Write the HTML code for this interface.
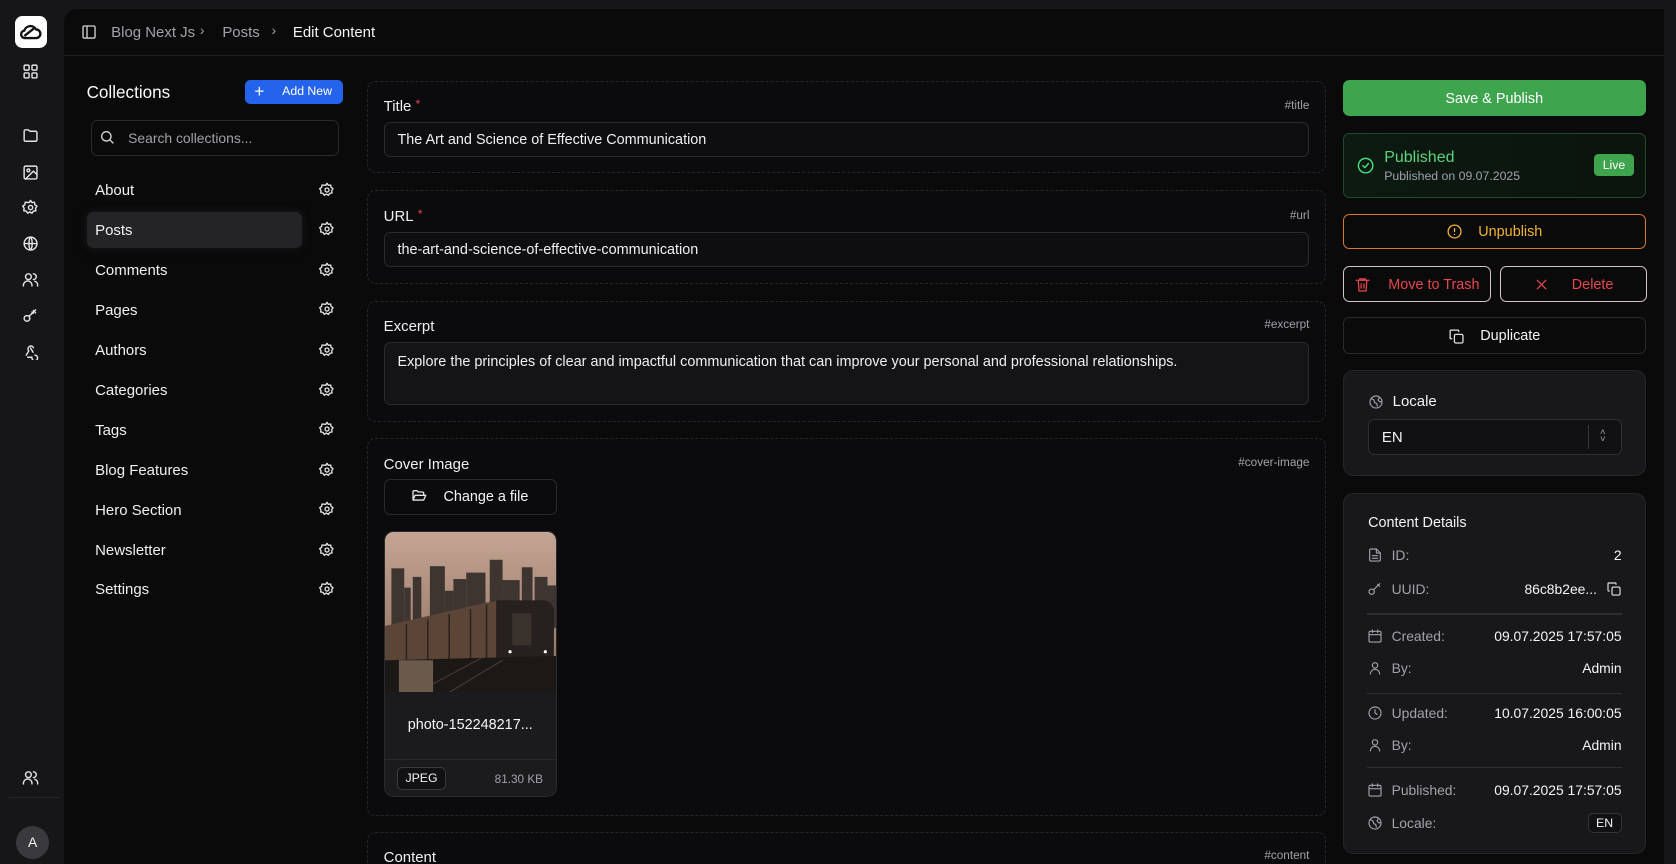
<!DOCTYPE html>
<html><head><meta charset="utf-8">
<style>
*{box-sizing:border-box;margin:0;padding:0}
html,body{width:1676px;height:864px;overflow:hidden;background:#161618}
#w{zoom:1.06888;width:1568px;height:808px;position:relative;font-family:"Liberation Sans",sans-serif;color:#ececee;background:#161618}
.a{position:absolute}
svg{display:block}
.ic{position:absolute;width:16px;height:16px;fill:none;stroke:#e4e4e7;stroke-width:2;stroke-linecap:round;stroke-linejoin:round}
#main{left:60px;top:8px;width:1497px;height:800px;background:#0a0a0b;border-radius:12px 0 0 0}
.card{position:absolute;left:343px;width:898px;border:1px dashed #26262a;border-radius:8px;background:#0b0b0d}
.lbl{position:absolute;left:15px;font-size:14px;color:#f0f0f2}
.lbl b{color:#e5484d;font-weight:normal;font-size:11px;vertical-align:top;margin-left:4px}
.tag{position:absolute;right:15px;font-size:11px;color:#a1a1aa}
.inp{position:absolute;left:15px;right:15px;border:1px solid #2a2a2e;border-radius:6px;background:#0e0e10;font-size:13.5px;color:#f0f0f2;padding-left:12px}
.li{position:absolute;left:89px;font-size:14px;color:#f0f0f2}
.gear{left:298px}
.btn{position:absolute;left:1256px;width:284px;border-radius:6px;font-size:13.5px;display:flex;align-items:center;justify-content:center;gap:14px}
.dt{position:absolute;left:22px;right:22px;font-size:13px;color:#a1a1aa;height:20px;display:flex;align-items:center}
.dt span.v{margin-left:auto;color:#f4f4f5}
.dt .ic{position:static;width:15px;height:15px;stroke:#a1a1aa;stroke-width:1.7;margin-right:8px}
.hr{position:absolute;left:22px;right:22px;height:1px;background:#2e2e33}
</style></head><body><div id="w">

<!-- left rail -->
<div class="a" style="left:14px;top:15px;width:30px;height:30px;background:#fff;border-radius:7px"></div>
<svg class="a" style="left:18px;top:21px" width="22" height="18" viewBox="0 0 22 18" fill="none" stroke="#111" stroke-width="2.2"><path d="M6 15h10a4 4 0 0 0 0-8 6 6 0 0 0-11 1 3.5 3.5 0 0 0 1 7z"/><path d="M5 13l9-7"/></svg>
<svg class="ic" style="left:21px;top:59px" viewBox="0 0 24 24"><rect x="3" y="3" width="7" height="7" rx="1.5"/><rect x="14" y="3" width="7" height="7" rx="1.5"/><rect x="3" y="14" width="7" height="7" rx="1.5"/><rect x="14" y="14" width="7" height="7" rx="1.5"/></svg>
<svg class="ic" style="left:21px;top:119px" viewBox="0 0 24 24"><path d="M3 6a2 2 0 0 1 2-2h4l2 2h8a2 2 0 0 1 2 2v10a2 2 0 0 1-2 2H5a2 2 0 0 1-2-2z"/></svg>
<svg class="ic" style="left:21px;top:153px" viewBox="0 0 24 24"><rect x="3" y="3" width="18" height="18" rx="2"/><circle cx="9" cy="9" r="2"/><path d="M21 15l-5-5L5 21"/></svg>
<svg class="ic" style="left:21px;top:186px" viewBox="0 0 24 24"><circle cx="12" cy="12" r="3"/><path d="M12 2l2 3 3.5-.5.5 3.5 3 2-2 3 .5 3.5-3.5.5-2 3-3-2-3 2-2-3-3.5-.5.5-3.5-2-3 3-2 .5-3.5L10 5z"/></svg>
<svg class="ic" style="left:21px;top:220px" viewBox="0 0 24 24"><circle cx="12" cy="12" r="9"/><path d="M3 12h18M12 3c3 3 3 15 0 18M12 3c-3 3-3 15 0 18"/></svg>
<svg class="ic" style="left:21px;top:254px" viewBox="0 0 24 24"><circle cx="9" cy="8" r="4"/><path d="M2 21v-1a6 6 0 0 1 12 0v1M16 4a4 4 0 0 1 0 8M22 21v-1a6 6 0 0 0-4-5.6"/></svg>
<svg class="ic" style="left:21px;top:287px" viewBox="0 0 24 24"><circle cx="7" cy="16" r="4"/><path d="M10 13l9-9M16 5l3 3M14 7l2 2"/></svg>
<svg class="ic" style="left:21px;top:321px" viewBox="0 0 24 24"><path d="M18 16.9A4 4 0 1 1 14 20H8M6 17l3.5-6a4 4 0 1 1 6.5-4.5M12 7l3.5 6"/></svg>
<svg class="ic" style="left:21px;top:719px" viewBox="0 0 24 24"><circle cx="9" cy="8" r="4"/><path d="M2 21v-1a6 6 0 0 1 12 0v1M16 4a4 4 0 0 1 0 8M22 21v-1a6 6 0 0 0-4-5.6"/></svg>
<div class="a" style="left:8px;top:746px;width:48px;height:1px;background:#26262a"></div>
<div class="a" style="left:15px;top:773px;width:31px;height:31px;border-radius:50%;background:#3a3a3e;color:#f0f0f0;font-size:13px;text-align:center;line-height:31px">A</div>

<div class="a" id="main"></div>
<!-- header -->
<div class="a" style="left:60px;top:51px;width:1497px;height:1px;background:#1f1f23"></div>
<svg class="ic" style="left:76px;top:22px;width:15px;height:15px;stroke:#d4d4d8" viewBox="0 0 24 24"><rect x="3" y="3" width="18" height="18" rx="2"/><path d="M9 3v18"/></svg>
<div class="a" style="left:104px;top:22px;font-size:14px;color:#a1a1aa">Blog Next Js</div>
<div class="a" style="left:187px;top:21px;font-size:13px;color:#a1a1aa">›</div>
<div class="a" style="left:208px;top:22px;font-size:14px;color:#a1a1aa">Posts</div>
<div class="a" style="left:254px;top:21px;font-size:13px;color:#a1a1aa">›</div>
<div class="a" style="left:274px;top:22px;font-size:14px;color:#f4f4f5">Edit Content</div>

<!-- collections -->
<div class="a" style="left:81px;top:78px;font-size:16px;color:#fafafa">Collections</div>
<div class="a" style="left:229px;top:75px;width:92px;height:22px;background:#2463eb;border-radius:5px;font-size:11.5px;color:#fff;line-height:22px;padding-left:35px">Add New</div>
<div class="a" style="left:238px;top:77px;font-size:16px;color:#fff;line-height:18px">+</div>
<div class="a" style="left:85px;top:112px;width:232px;height:34px;border:1px solid #2a2a2e;border-radius:6px;font-size:13px;color:#a1a1aa;line-height:33px;padding-left:34px">Search collections...</div>
<svg class="ic" style="left:93px;top:121px;width:15px;height:15px;stroke:#d4d4d8" viewBox="0 0 24 24"><circle cx="11" cy="11" r="7"/><path d="M21 21l-5-5"/></svg>
<div class="a" style="left:81px;top:198px;width:202px;height:34px;background:#242427;border-radius:6px;box-shadow:0 0 8px #1a1a1d"></div>
<div class="li" style="top:170px">About</div>
<div class="li" style="top:208px">Posts</div>
<div class="li" style="top:245px">Comments</div>
<div class="li" style="top:283px">Pages</div>
<div class="li" style="top:320px">Authors</div>
<div class="li" style="top:357px">Categories</div>
<div class="li" style="top:395px">Tags</div>
<div class="li" style="top:432px">Blog Features</div>
<div class="li" style="top:470px">Hero Section</div>
<div class="li" style="top:507px">Newsletter</div>
<div class="li" style="top:544px">Settings</div>
<svg width="0" height="0" style="position:absolute"><defs><symbol id="g" viewBox="0 0 24 24"><circle cx="12" cy="12" r="3"/><path d="M12 2l2 3 3.5-.5.5 3.5 3 2-2 3 .5 3.5-3.5.5-2 3-3-2-3 2-2-3-3.5-.5.5-3.5-2-3 3-2 .5-3.5L10 5z"/></symbol></defs></svg>
<svg class="ic gear" style="top:170px;width:15px;height:15px"><use href="#g"/></svg>
<svg class="ic gear" style="top:207px;width:15px;height:15px"><use href="#g"/></svg>
<svg class="ic gear" style="top:245px;width:15px;height:15px"><use href="#g"/></svg>
<svg class="ic gear" style="top:282px;width:15px;height:15px"><use href="#g"/></svg>
<svg class="ic gear" style="top:320px;width:15px;height:15px"><use href="#g"/></svg>
<svg class="ic gear" style="top:357px;width:15px;height:15px"><use href="#g"/></svg>
<svg class="ic gear" style="top:394px;width:15px;height:15px"><use href="#g"/></svg>
<svg class="ic gear" style="top:432px;width:15px;height:15px"><use href="#g"/></svg>
<svg class="ic gear" style="top:469px;width:15px;height:15px"><use href="#g"/></svg>
<svg class="ic gear" style="top:507px;width:15px;height:15px"><use href="#g"/></svg>
<svg class="ic gear" style="top:544px;width:15px;height:15px"><use href="#g"/></svg>

<!-- cards -->
<div class="card" style="top:76px;height:86px">
 <div class="lbl" style="top:15px">Title<b>*</b></div><div class="tag" style="top:16px">#title</div>
 <div class="inp" style="top:37px;height:33px;line-height:33px">The Art and Science of Effective Communication</div>
</div>
<div class="card" style="top:178px;height:88px">
 <div class="lbl" style="top:16px">URL<b>*</b></div><div class="tag" style="top:17px">#url</div>
 <div class="inp" style="top:38px;height:33px;line-height:33px">the-art-and-science-of-effective-communication</div>
</div>
<div class="card" style="top:282px;height:113px">
 <div class="lbl" style="top:15px">Excerpt</div><div class="tag" style="top:15px">#excerpt</div>
 <div class="inp" style="top:37px;height:59px;padding-top:10px;background:#141416">Explore the principles of clear and impactful communication that can improve your personal and professional relationships.</div>
</div>
<div class="card" style="top:410px;height:353px">
 <div class="lbl" style="top:16px">Cover Image</div><div class="tag" style="top:16px">#cover-image</div>
 <div class="a" style="left:15px;top:37px;width:162px;height:34px;border:1px solid #2a2a2e;border-radius:6px;font-size:13.5px;line-height:33px;padding-left:55px;color:#f4f4f5">Change a file</div>
 <svg class="ic" style="left:41px;top:46px;width:15px;height:15px" viewBox="0 0 24 24"><path d="M3 18V6a2 2 0 0 1 2-2h4l2 2h6a2 2 0 0 1 2 2v2M3 18l3-7h16l-3 7z"/></svg>
 <div class="a" style="left:15px;top:86px;width:162px;height:249px;border:1px solid #2a2a2e;border-radius:9px;background:#1b1b1e;overflow:hidden">
  <svg width="162" height="150" viewBox="0 0 162 150">
   <defs><linearGradient id="sk" x1="0" y1="0" x2="0" y2="1"><stop offset="0" stop-color="#c4a595"/><stop offset="1" stop-color="#8a6a58"/></linearGradient></defs>
   <rect width="162" height="150" fill="url(#sk)"/>
   <g fill="#3e3430"><rect x="6" y="34" width="12" height="60"/><rect x="18" y="52" width="6" height="40"/><rect x="26" y="42" width="8" height="50"/><rect x="42" y="32" width="14" height="60"/><rect x="56" y="55" width="8" height="40"/><rect x="64" y="44" width="12" height="50"/><rect x="76" y="38" width="18" height="55"/><rect x="98" y="26" width="12" height="60"/><rect x="110" y="45" width="16" height="50"/><rect x="128" y="33" width="10" height="60"/><rect x="140" y="42" width="12" height="50"/><rect x="152" y="50" width="10" height="40"/></g>
   <path d="M0 88 L95 66 L110 64 L110 122 L0 120z" fill="#5b4536"/>
   <g stroke="#2e2420" stroke-width="1.5"><path d="M20 86v36M40 82v40M60 77v45M80 72v50M95 68v54"/></g>
   <path d="M40 68 h0 M104 64 h44 a10 10 0 0 1 10 10 v48 h-54z" fill="#26211e"/>
   <rect x="119" y="76" width="18" height="30" fill="#3a322c"/>
   <circle cx="117" cy="112" r="1.5" fill="#fff"/><circle cx="150" cy="112" r="1.5" fill="#fff"/>
   <path d="M0 120 L162 116 L162 150 L0 150z" fill="#1c1816"/>
   <path d="M30 150 L90 118 M60 150 L110 120" stroke="#4a3a30" stroke-width="1"/>
   <rect x="13" y="120" width="32" height="30" fill="#6b5a4c"/>
  </svg>
  <div class="a" style="left:0;right:0;top:173px;text-align:center;font-size:13.5px;color:#f4f4f5">photo-152248217...</div>
  <div class="a" style="left:0;right:0;top:212px;height:1px;background:#2a2a2e"></div>
  <div class="a" style="left:12px;top:220px;width:45px;height:21px;border:1px solid #3a3a3e;border-radius:5px;font-size:11.5px;text-align:center;line-height:20px;color:#f4f4f5;background:#111113">JPEG</div>
  <div class="a" style="right:12px;top:225px;font-size:11px;color:#a1a1aa">81.30 KB</div>
 </div>
</div>
<div class="card" style="top:778px;height:60px">
 <div class="lbl" style="top:15px">Content</div><div class="tag" style="top:15px">#content</div>
</div>

<!-- right -->
<div class="btn" style="top:75px;height:34px;background:#3ea44e;color:#fff;padding-top:1px">Save &amp; Publish</div>
<div class="a" style="left:1256px;top:124px;width:284px;height:61px;border:1px solid #1f4a2b;border-radius:6px;background:linear-gradient(90deg,#0c1a10,#0b140d)"></div>
<svg class="ic" style="left:1269px;top:146px;width:18px;height:18px;stroke:#4ade80;stroke-width:1.8" viewBox="0 0 24 24"><circle cx="12" cy="12" r="9"/><path d="M8.5 12l2.5 2.5 4.5-5"/></svg>
<div class="a" style="left:1295px;top:138px;font-size:15px;color:#5dd27a">Published</div>
<div class="a" style="left:1295px;top:158px;font-size:11.5px;color:#a1a1aa">Published on 09.07.2025</div>
<div class="a" style="left:1491px;top:144px;width:38px;height:21px;background:#3ea44e;border-radius:4px;font-size:11.5px;color:#fff;text-align:center;line-height:21px">Live</div>
<div class="btn" style="top:200px;height:33px;border:1px solid #d97a2b;color:#f0b530;padding-top:1px">
 <svg class="ic" style="position:static;stroke:#f0b530;stroke-width:1.8" viewBox="0 0 24 24"><circle cx="12" cy="12" r="9"/><path d="M12 8v4M12 16h.01"/></svg>Unpublish</div>
<div class="btn" style="top:249px;width:139px;height:34px;border:1px solid #d6c4c4;color:#e5484d;gap:16px;padding-top:1px">
 <svg class="ic" style="position:static;stroke:#e5484d;stroke-width:1.8" viewBox="0 0 24 24"><path d="M3 6h18M8 6V4h8v2M6 6l1 15h10l1-15M10 11v6M14 11v6"/></svg>Move to Trash</div>
<div class="btn" style="left:1403px;top:249px;width:138px;height:34px;border:1px solid #d6c4c4;color:#e5484d;gap:20px;padding-top:1px">
 <svg class="ic" style="position:static;stroke:#e5484d;stroke-width:1.8" viewBox="0 0 24 24"><path d="M6 6l12 12M18 6L6 18"/></svg>Delete</div>
<div class="btn" style="top:297px;height:34px;border:1px solid #2a2a2e;color:#f4f4f5;padding-top:1px">
 <svg class="ic" style="position:static;stroke-width:1.8" viewBox="0 0 24 24"><rect x="9" y="9" width="12" height="12" rx="2"/><path d="M5 15H4a1 1 0 0 1-1-1V4a1 1 0 0 1 1-1h10a1 1 0 0 1 1 1v1"/></svg>Duplicate</div>

<div class="a" style="left:1256px;top:346px;width:284px;height:99px;background:#18181b;border:1px solid #26262a;border-radius:10px">
 <svg class="ic" style="left:23px;top:22px;width:15px;height:15px;stroke:#a1a1aa;stroke-width:1.7" viewBox="0 0 24 24"><circle cx="12" cy="12" r="9"/><path d="M5 7l4 2 1 4 3 1 1 4M17 5l-2 4 3 3 3-1"/></svg>
 <div class="a" style="left:46px;top:21px;font-size:14px;color:#f4f4f5">Locale</div>
 <div class="a" style="left:23px;top:45px;width:238px;height:34px;border:1px solid #2e2e33;border-radius:6px;background:#111113;font-size:14px;line-height:33px;padding-left:12px;color:#f4f4f5">EN</div>
 <div class="a" style="left:229px;top:51px;width:1px;height:22px;background:#333338"></div>
 <div class="a" style="left:240px;top:54px;font-size:9px;color:#a1a1aa;line-height:7px">˄<br>˅</div>
</div>

<div class="a" style="left:1256px;top:461px;width:284px;height:338px;background:#18181b;border:1px solid #26262a;border-radius:10px">
 <div class="a" style="left:23px;top:20px;font-size:13.5px;color:#f4f4f5">Content Details</div>
 <div class="dt" style="top:47px"><svg class="ic" viewBox="0 0 24 24"><path d="M14 3H6a2 2 0 0 0-2 2v14a2 2 0 0 0 2 2h12a2 2 0 0 0 2-2V9z"/><path d="M14 3v6h6M8 13h8M8 17h8"/></svg>ID:<span class="v">2</span></div>
 <div class="dt" style="top:79px"><svg class="ic" viewBox="0 0 24 24"><circle cx="7" cy="16" r="4"/><path d="M10 13l9-9M16 5l3 3"/></svg>UUID:<span class="v">86c8b2ee...</span><svg class="ic" style="stroke:#e4e4e7;margin:0 0 0 8px" viewBox="0 0 24 24"><rect x="9" y="9" width="12" height="12" rx="2"/><path d="M5 15H4a1 1 0 0 1-1-1V4a1 1 0 0 1 1-1h10a1 1 0 0 1 1 1v1"/></svg></div>
 <div class="hr" style="top:112px"></div>
 <div class="dt" style="top:123px"><svg class="ic" viewBox="0 0 24 24"><rect x="3" y="5" width="18" height="16" rx="2"/><path d="M3 10h18M8 3v4M16 3v4"/></svg>Created:<span class="v">09.07.2025 17:57:05</span></div>
 <div class="dt" style="top:153px"><svg class="ic" viewBox="0 0 24 24"><circle cx="12" cy="8" r="4"/><path d="M5 21a7 7 0 0 1 14 0"/></svg>By:<span class="v">Admin</span></div>
 <div class="hr" style="top:186px"></div>
 <div class="dt" style="top:195px"><svg class="ic" viewBox="0 0 24 24"><circle cx="12" cy="12" r="9"/><path d="M12 7v5l3 2"/></svg>Updated:<span class="v">10.07.2025 16:00:05</span></div>
 <div class="dt" style="top:225px"><svg class="ic" viewBox="0 0 24 24"><circle cx="12" cy="8" r="4"/><path d="M5 21a7 7 0 0 1 14 0"/></svg>By:<span class="v">Admin</span></div>
 <div class="hr" style="top:256px"></div>
 <div class="dt" style="top:267px"><svg class="ic" viewBox="0 0 24 24"><rect x="3" y="5" width="18" height="16" rx="2"/><path d="M3 10h18M8 3v4M16 3v4"/></svg>Published:<span class="v">09.07.2025 17:57:05</span></div>
 <div class="dt" style="top:298px"><svg class="ic" viewBox="0 0 24 24"><circle cx="12" cy="12" r="9"/><path d="M5 7l4 2 1 4 3 1 1 4M17 5l-2 4 3 3 3-1"/></svg>Locale:<span class="v" style="border:1px solid #333338;border-radius:5px;padding:2px 7px;font-size:11.5px;background:#111113">EN</span></div>
</div>

</div></body></html>
